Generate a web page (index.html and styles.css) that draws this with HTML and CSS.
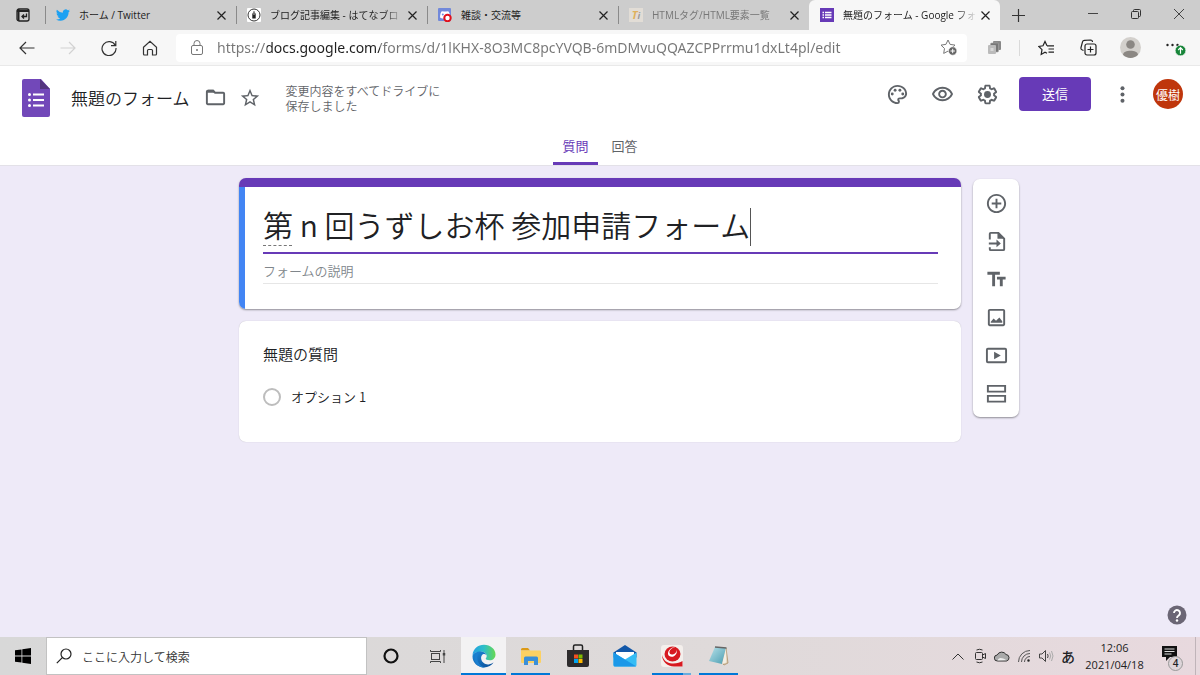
FILE: index.html
```html
<!DOCTYPE html>
<html lang="ja">
  <head>
    <meta charset="UTF-8" />
    <meta name="viewport" content="width=device-width, initial-scale=1" />
    <title>無題のフォーム - Google フォーム</title>
    <link rel="stylesheet" href="styles.css">
  </head>
  <body>
    <!-- Browser tabs -->
    <div class="tab-strip">
      <button class="tab-menu" aria-label="タブ操作">
        <svg width="14" height="14" viewBox="0 0 14 14" fill="none" stroke="#222" stroke-width="1.3"><rect x="1" y="1" width="12" height="12" rx="2"/><path d="M1 3h12M2.5 1v12" stroke-width="2"/><path d="M10.500 5.500v3H6M8 6.500l-2 2 2 2"/></svg>
      </button>
      <div class="tab">
        <svg class="tab-icon" viewBox="0 0 24 24" fill="#1da1f2"><path d="M23.950 4.570a10 10 0 0 1-2.820.770 4.960 4.960 0 0 0 2.160-2.720 9.900 9.900 0 0 1-3.120 1.190 4.920 4.920 0 0 0-8.380 4.480A13.930 13.930 0 0 1 1.640 3.160a4.920 4.920 0 0 0 1.520 6.570 4.900 4.900 0 0 1-2.230-.610v.060a4.920 4.920 0 0 0 3.950 4.830 5 5 0 0 1-2.210.080 4.940 4.940 0 0 0 4.600 3.420A9.870 9.870 0 0 1 0 19.540a13.990 13.990 0 0 0 7.550 2.210c9.050 0 14-7.500 14-13.980 0-.210 0-.420-.020-.630a9.940 9.940 0 0 0 2.420-2.570z"/></svg>
        <span class="tab-title">ホーム / Twitter</span>
        <button class="tab-close" aria-label="閉じる"><svg width="9" height="9" viewBox="0 0 9 9" stroke="#222" stroke-width="1.200"><path d="M.5.5l8 8M8.500.5l-8 8"/></svg></button>
      </div>
      <div class="tab">
        <svg class="tab-icon" viewBox="0 0 14 14"><rect width="14" height="14" rx="1" fill="#fff"/><circle cx="7" cy="7" r="6" fill="none" stroke="#333"/><path d="M5.300 10.500V6L7 2.800 8.700 6v4.500z" fill="#222"/><path d="M7 4v3" stroke="#fff" stroke-width=".7"/></svg>
        <span class="tab-title fade">ブログ記事編集 - はてなブロ</span>
        <button class="tab-close" aria-label="閉じる"><svg width="9" height="9" viewBox="0 0 9 9" stroke="#222" stroke-width="1.200"><path d="M.5.5l8 8M8.500.5l-8 8"/></svg></button>
      </div>
      <div class="tab">
        <svg class="tab-icon" viewBox="0 0 14 14"><rect width="13" height="13" rx="1" fill="#7289da"/><path d="M2 9.500C2 6 3 3.500 4 3.200l2 .3h2l2-.3c1 .3 2 2.800 2 5.300l-3 2H4z" fill="#fff"/><circle cx="4.800" cy="6.500" r="1" fill="#7289da"/><circle cx="9.500" cy="10" r="3.200" fill="#fff" stroke="#e0101c" stroke-width="2"/></svg>
        <span class="tab-title">雑談・交流等</span>
        <button class="tab-close" aria-label="閉じる"><svg width="9" height="9" viewBox="0 0 9 9" stroke="#222" stroke-width="1.200"><path d="M.5.5l8 8M8.500.5l-8 8"/></svg></button>
      </div>
      <div class="tab sleeping">
        <span class="tab-icon ti-icon">T<small>i</small></span>
        <span class="tab-title fade">HTMLタグ/HTML要素一覧</span>
        <button class="tab-close" aria-label="閉じる"><svg width="9" height="9" viewBox="0 0 9 9" stroke="#222" stroke-width="1.200"><path d="M.5.5l8 8M8.500.5l-8 8"/></svg></button>
      </div>
      <div class="tab active">
        <svg class="tab-icon" viewBox="0 0 14 14"><rect width="14" height="14" fill="#673ab7"/><path d="M5 4.500h6.500M5 7h6.500M5 9.500h6.500M2.500 4.500H4M2.500 7H4M2.500 9.500H4" stroke="#fff" stroke-width="1.400"/></svg>
        <span class="tab-title fade">無題のフォーム - Google フォ</span>
        <button class="tab-close" aria-label="閉じる"><svg width="9" height="9" viewBox="0 0 9 9" stroke="#222" stroke-width="1.200"><path d="M.5.5l8 8M8.500.5l-8 8"/></svg></button>
      </div>
      <button class="new-tab" aria-label="新しいタブ"><svg width="13" height="13" viewBox="0 0 13 13" stroke="#333" stroke-width="1.200"><path d="M6.500 0v13M0 6.500h13"/></svg></button>
      <div class="window-controls">
        <button aria-label="最小化"><svg width="10" height="10" viewBox="0 0 10 10" stroke="#444"><path d="M0 4.500h10"/></svg></button>
        <button aria-label="元に戻す"><svg width="10" height="10" viewBox="0 0 10 10" fill="none" stroke="#333"><rect x=".5" y="2.500" width="7" height="7" rx="1"/><path d="M2.500 2.500V1.500a1 1 0 0 1 1-1h5a1 1 0 0 1 1 1v5a1 1 0 0 1-1 1h-1"/></svg></button>
        <button aria-label="閉じる"><svg width="10" height="10" viewBox="0 0 10 10" stroke="#444"><path d="M0 0l10 10M10 0L0 10"/></svg></button>
      </div>
    </div>

    <!-- Address bar -->
    <div class="browser-bar">
      <div class="nav-buttons">
        <button aria-label="戻る"><svg width="16" height="14" viewBox="0 0 16 14" fill="none" stroke="#333" stroke-width="1.200"><path d="M15.500 7H1M7 1L1 7l6 6"/></svg></button>
        <button aria-label="進む" disabled><svg width="16" height="14" viewBox="0 0 16 14" fill="none" stroke="#d2d2d2" stroke-width="1.200"><path d="M.5 7H15M9 1l6 6-6 6"/></svg></button>
        <button aria-label="更新"><svg width="16" height="16" viewBox="0 0 16 16" fill="none" stroke="#333" stroke-width="1.200"><path d="M14.300 5.500A7 7 0 1 0 15 8M14.800 1v4.700H10"/></svg></button>
        <button aria-label="ホーム"><svg width="16" height="16" viewBox="0 0 16 16" fill="none" stroke="#333" stroke-width="1.200"><path d="M1.500 7.200L8 1.200l6.500 6V14a1 1 0 0 1-1 1h-3v-4.500a1 1 0 0 0-1-1h-3a1 1 0 0 0-1 1V15h-3a1 1 0 0 1-1-1z"/></svg></button>
      </div>
      <div class="address">
        <svg width="14" height="16" viewBox="0 0 14 16" fill="none" stroke="#777"><rect x="1.500" y="5.500" width="11" height="9" rx="1.500"/><path d="M4 5.500V3.500a3 3 0 0 1 6 0v2"/><circle cx="7" cy="10" r=".6" fill="#777"/></svg>
        <input class="url" type="text" aria-label="アドレス" value="https://docs.google.com/forms/d/1lKHX-8O3MC8pcYVQB-6mDMvuQQAZCPPrrmu1dxLt4pl/edit">
        <button aria-label="お気に入りに追加"><svg width="18" height="17" viewBox="0 0 18 17" fill="none" stroke="#777"><path d="M8 1l2.100 4.400 4.900.7-3.500 3.400.8 4.900L8 12.100l-4.300 2.300.8-4.900L1 6.100l4.900-.7z"/><circle cx="12.700" cy="12" r="4.200" fill="#666" stroke="#fff" stroke-width=".6"/><path d="M12.700 9.800v4.400M10.500 12h4.400" stroke="#fff"/></svg></button>
      </div>
      <div class="browser-tools">
        <button aria-label="拡張機能"><svg width="15" height="15" viewBox="0 0 15 15"><rect x="6" y="1" width="8" height="9" rx="1" fill="#888"/><rect x="3.500" y="3" width="8" height="9" rx="1" fill="#777" stroke="#aaa" stroke-width=".6"/><rect x="1" y="5" width="8" height="9" rx="1" fill="#bbb"/><path d="M3.500 8h3v3h-3z" fill="#d8d8d8"/></svg></button>
        <span class="bar-divider"></span>
        <button aria-label="お気に入り"><svg width="17" height="16" viewBox="0 0 17 16" fill="none" stroke="#222" stroke-width="1.200"><path d="M9 5.800L7 1.500 5 5.800l-4.200.6L4 9.600l-.8 4.800L7 12.200l2 1.100M9 5.800h7M10.500 9H16M10.500 12.200H16"/></svg></button>
        <button aria-label="コレクション"><svg width="17" height="17" viewBox="0 0 17 17" fill="none" stroke="#222" stroke-width="1.200"><rect x="5" y="5" width="11" height="11" rx="2"/><path d="M10.500 7.500v6M7.500 10.500h6M3.500 11.500L2 10.800A2 2 0 0 1 1 8.500L2.500 3a2 2 0 0 1 2-1.700l6-.3A2 2 0 0 1 12.500 3"/></svg></button>
        <button aria-label="プロファイル"><svg width="21" height="21" viewBox="0 0 21 21"><circle cx="10.500" cy="10.500" r="10.500" fill="#d3d0cc"/><circle cx="10.500" cy="7.500" r="4.300" fill="#8b8783"/><path d="M3 17.800c0-5.500 15-5.500 15 0a10.500 10.500 0 0 1-15 0z" fill="#8b8783"/></svg></button>
        <button aria-label="設定など"><svg width="20" height="19" viewBox="0 0 20 19"><g fill="#222"><circle cx="1.500" cy="7" r="1.200"/><circle cx="6.500" cy="7" r="1.200"/><circle cx="11.500" cy="7" r="1.200"/></g><circle cx="14.500" cy="12.500" r="5.300" fill="#178539" stroke="#f7f7f7" stroke-width=".6"/><path d="M14.500 15.800V9.700M12.200 12l2.300-2.300 2.300 2.300" fill="none" stroke="#fff" stroke-width="1.200"/></svg></button>
      </div>
    </div>

    <!-- Forms header -->
    <header class="app-header">
      <div class="app-row">
        <a class="logo" href="#" aria-label="フォームのホーム">
          <svg width="28" height="38" viewBox="0 0 28 38"><path d="M2 0h17l9 10v26a2 2 0 0 1-2 2H2a2 2 0 0 1-2-2V2a2 2 0 0 1 2-2z" fill="#7248b9"/><path d="M18 0l10 10H18z" fill="#54357f"/><path d="M11 15.500h11M11 21h11M11 26.500h11" stroke="#fff" stroke-width="2.200"/><g fill="#fff"><circle cx="7.500" cy="15.500" r="1.500"/><circle cx="7.500" cy="21" r="1.500"/><circle cx="7.500" cy="26.500" r="1.500"/></g></svg>
        </a>
        <input class="doc-name" type="text" aria-label="ドキュメント名" value="無題のフォーム">
        <button class="doc-button" aria-label="フォルダに移動"><svg width="23" height="23" viewBox="0 0 24 24" fill="#5f6368"><path d="M9.170 6l2 2H20v10H4V6h5.170M10 4H4c-1.100 0-2 .9-2 2v12c0 1.100.9 2 2 2h16c1.100 0 2-.9 2-2V8c0-1.100-.9-2-2-2h-8l-2-2z"/><path d="M4 4h6l2 3H3z"/></svg></button>
        <button class="doc-button" aria-label="スターを付ける"><svg width="22" height="22" viewBox="0 0 24 24" fill="#5f6368"><path d="M22 9.240l-7.190-.620L12 2 9.190 8.630 2 9.240l5.460 4.730L5.820 21 12 17.270 18.180 21l-1.630-7.030L22 9.240zM12 15.400l-3.760 2.270 1-4.280-3.320-2.880 4.380-.380L12 6.100l1.710 4.040 4.380.380-3.320 2.880 1 4.280L12 15.400z"/></svg></button>
        <p class="save-state">変更内容をすべてドライブに<br>保存しました</p>
        <div class="app-actions">
          <button class="icon-button" aria-label="テーマをカスタマイズ"><svg width="23" height="23" viewBox="0 0 24 24" fill="#5f6368"><path d="M12 22C6.490 22 2 17.510 2 12S6.490 2 12 2s10 4.040 10 9c0 3.310-2.690 6-6 6h-1.770c-.280 0-.5.220-.5.5 0 .120.050.230.130.330.410.470.640 1.060.640 1.670A2.500 2.500 0 0 1 12 22zm0-18c-4.410 0-8 3.590-8 8s3.590 8 8 8c.280 0 .5-.220.5-.5a.540.540 0 0 0-.140-.350c-.410-.460-.630-1.050-.630-1.650a2.500 2.500 0 0 1 2.500-2.500H16c2.210 0 4-1.790 4-4 0-3.860-3.590-7-8-7z"/><circle cx="6.500" cy="11.500" r="1.500"/><circle cx="9.500" cy="7.500" r="1.500"/><circle cx="14.500" cy="7.500" r="1.500"/><circle cx="17.500" cy="11.500" r="1.500"/></svg></button>
          <button class="icon-button" aria-label="プレビュー"><svg width="23" height="23" viewBox="0 0 24 24" fill="#5f6368"><path d="M12 6c3.790 0 7.170 2.130 8.820 5.500C19.170 14.870 15.790 17 12 17s-7.170-2.130-8.820-5.500C4.830 8.130 8.210 6 12 6m0-2C7 4 2.730 7.110 1 11.500 2.730 15.890 7 19 12 19s9.270-3.110 11-7.500C21.270 7.110 17 4 12 4zm0 5c1.380 0 2.500 1.120 2.500 2.500S13.380 14 12 14s-2.500-1.120-2.500-2.500S10.620 9 12 9m0-2c-2.480 0-4.500 2.020-4.500 4.500S9.520 16 12 16s4.500-2.020 4.500-4.500S14.480 7 12 7z"/></svg></button>
          <button class="icon-button" aria-label="設定"><svg width="23" height="23" viewBox="0 0 24 24" fill="#5f6368"><path d="M13.850 22.250h-3.700c-.740 0-1.360-.540-1.450-1.270l-.270-1.890c-.270-.140-.530-.290-.790-.460l-1.800.720c-.7.260-1.470-.030-1.810-.650L2.200 15.530c-.350-.660-.2-1.440.360-1.880l1.530-1.190c-.010-.150-.020-.3-.020-.460 0-.150.010-.310.020-.460l-1.520-1.190c-.590-.450-.740-1.260-.370-1.880l1.850-3.190c.340-.620 1.110-.9 1.790-.630l1.810.730c.260-.170.520-.320.780-.460l.270-1.910c.090-.7.710-1.250 1.440-1.250h3.700c.740 0 1.360.540 1.450 1.270l.270 1.890c.270.140.530.290.790.460l1.800-.720c.710-.260 1.480.030 1.820.650l1.840 3.180c.360.660.2 1.440-.360 1.880l-1.520 1.190c.010.150.020.3.020.460s-.010.310-.020.460l1.520 1.190c.560.450.720 1.230.370 1.860l-1.860 3.220c-.340.620-1.110.9-1.800.630l-1.800-.720c-.260.170-.520.320-.780.460l-.270 1.910c-.1.680-.720 1.220-1.460 1.220zm-3.230-2h2.760l.370-2.550.530-.220c.440-.180.880-.440 1.340-.780l.450-.340 2.380.960 1.380-2.400-2.030-1.580.070-.560c.030-.260.060-.510.060-.780s-.030-.530-.060-.780l-.070-.560 2.030-1.580-1.390-2.400-2.390.960-.450-.350c-.420-.320-.870-.580-1.330-.770l-.520-.220-.370-2.550h-2.760l-.370 2.550-.530.210c-.440.190-.880.440-1.340.790l-.450.330-2.380-.950-1.390 2.390 2.030 1.580-.070.560a7 7 0 0 0-.060.790c0 .260.020.530.060.780l.070.560-2.030 1.580 1.380 2.400 2.390-.960.450.350c.430.330.860.580 1.330.770l.530.220.380 2.550z"/><circle cx="12" cy="12" r="3.600"/></svg></button>
          <button class="send-button">送信</button>
          <button class="icon-button" aria-label="その他"><svg width="23" height="23" viewBox="0 0 24 24" fill="#5f6368"><circle cx="12" cy="5.500" r="2.100"/><circle cx="12" cy="12" r="2.100"/><circle cx="12" cy="18.500" r="2.100"/></svg></button>
          <button class="avatar">優樹</button>
        </div>
      </div>
      <nav class="form-tabs">
        <button class="form-tab selected">質問</button>
        <button class="form-tab">回答</button>
      </nav>
    </header>

    <!-- Form editor -->
    <main class="editor">
      <div class="cards">
        <section class="card title-card">
          <div class="title-body">
            <div class="title-field">
              <input class="form-title" type="text" aria-label="フォームのタイトル" value="第 n 回うずしお杯 参加申請フォーム">
              <span class="caret"></span>
              <span class="spell-mark"></span>
            </div>
            <input class="form-description" type="text" aria-label="フォームの説明" placeholder="フォームの説明">
          </div>
        </section>
        <section class="card question-card">
          <h2 class="question-title">無題の質問</h2>
          <label class="option"><input type="radio" name="option">オプション 1</label>
        </section>
      </div>
      <div class="side-toolbar">
        <button aria-label="質問を追加"><svg width="23" height="23" viewBox="0 0 24 24" fill="#5f6368"><path d="M13 7h-2v4H7v2h4v4h2v-4h4v-2h-4V7zm-1-5C6.480 2 2 6.480 2 12s4.480 10 10 10 10-4.480 10-10S17.520 2 12 2zm0 18c-4.410 0-8-3.590-8-8s3.590-8 8-8 8 3.590 8 8-3.590 8-8 8z"/></svg></button>
        <button aria-label="質問をインポート"><svg width="23" height="23" viewBox="0 0 24 24" fill="none" stroke="#5f6368" stroke-width="2"><path d="M5 10V4a1 1 0 0 1 1-1h8l6 6v11a1 1 0 0 1-1 1H6a1 1 0 0 1-1-1v-2M4 14h10"/><path d="M13 2l7.500 7H13zM12 10l4.500 4-4.500 4z" fill="#5f6368" stroke="none"/></svg></button>
        <button aria-label="タイトルと説明を追加"><svg width="23" height="23" viewBox="0 0 24 24" fill="#5f6368"><path d="M2.500 4v3h5v12h3V7h5V4h-13zm19 5h-9v3h3v7h3v-7h3V9z"/></svg></button>
        <button aria-label="画像を追加"><svg width="23" height="23" viewBox="0 0 24 24" fill="#5f6368"><path d="M19 5v14H5V5h14m0-2H5c-1.100 0-2 .9-2 2v14c0 1.100.9 2 2 2h14c1.100 0 2-.9 2-2V5c0-1.100-.9-2-2-2zM6 17.500v-1l3-3.500 2.500 2.500L15 12l3 4v1.500z"/></svg></button>
        <button aria-label="動画を追加"><svg width="23" height="23" viewBox="0 0 24 24" fill="#5f6368"><path d="M9.500 8v8l7-4zM21 4H3a2 2 0 0 0-2 2v12a2 2 0 0 0 2 2h18a2 2 0 0 0 2-2V6a2 2 0 0 0-2-2zm0 14H3V6h18z"/></svg></button>
        <button aria-label="セクションを追加"><svg width="23" height="23" viewBox="0 0 24 24" fill="none" stroke="#5f6368" stroke-width="2"><path d="M3 4h18v6H3zM3 14.500h18v6H3z"/></svg></button>
      </div>
      <button class="help" aria-label="ヘルプ"><svg width="20" height="20" viewBox="0 0 20 20"><circle cx="10" cy="10" r="9.500" fill="#6b6675"/><path d="M7 8a3 3 0 1 1 4.800 2.400C10.500 11.300 10 11.600 10 13" fill="none" stroke="#fff" stroke-width="1.900"/><circle cx="10" cy="15.500" r="1.200" fill="#fff"/></svg></button>
    </main>

    <!-- Windows taskbar -->
    <footer class="taskbar">
      <button class="task narrow" aria-label="スタート"><svg width="16" height="16" viewBox="0 0 16 16"><path d="M0 2.300L6.500 1.400v6.200H0zM7.300 1.300L16 0v7.600H7.300zM0 8.400h6.500v6.200L0 13.700zM7.300 8.400H16V16l-8.700-1.300z"/></svg></button>
      <label class="task-search">
        <svg width="16" height="16" viewBox="0 0 16 16" fill="none" stroke="#222" stroke-width="1.200"><circle cx="10" cy="6" r="5"/><path d="M6.300 9.700L.8 15.200"/></svg>
        <input type="search" placeholder="ここに入力して検索" aria-label="検索">
      </label>
      <button class="task" aria-label="Cortana"><svg width="16" height="16" viewBox="0 0 16 16"><circle cx="8" cy="8" r="6.500" fill="none" stroke="#111" stroke-width="2.200"/></svg></button>
      <button class="task narrow" aria-label="タスク ビュー"><svg width="17" height="15" viewBox="0 0 17 15" fill="none" stroke="#444"><rect x="2.500" y="4.500" width="8" height="6"/><path d="M1.500 1v1.500h10V1M1.500 14v-1.500h10V14M15 1v13"/><path d="M15 4v2.500" stroke-width="2.500"/></svg></button>
      <button class="task current" aria-label="Edge">
        <svg width="24" height="24" viewBox="0 0 24 24">
          <defs>
            <linearGradient id="edgeTop" x1="0" x2="1"><stop offset="0" stop-color="#239fe2"/><stop offset=".5" stop-color="#2dbfc8"/><stop offset="1" stop-color="#67d84f"/></linearGradient>
            <linearGradient id="edgeBottom" x1="0" x2="1" y2="1"><stop offset="0" stop-color="#1a8ad9"/><stop offset="1" stop-color="#0c4c96"/></linearGradient>
          </defs>
          <path d="M.5 11C1.200 4.800 6 .8 12 .8c6.500 0 11.500 4.500 11.500 9.700 0 3.500-2.500 5.800-5.800 5.800-2.500 0-4-.8-4-1.700 0-.6 1-1 1-2.600 0-2.300-2.200-4.300-5.200-4.300C5.500 7.700 2 8.500.5 11z" fill="url(#edgeTop)"/>
          <path d="M.5 12.500C.5 9 4.500 7.500 8.700 7.500c3 0 5 1.500 5.700 3.500-1-1-2.200-1.300-3-.9-1.800.9-2.600 2.800-2.200 5 .5 3.400 4 5.800 7.600 5.300 1.700-.2 3.400-1 4.800-1.800-2 3-5.500 4.800-9.600 4.800C5.500 23.400.5 18.500.5 12.500z" fill="url(#edgeBottom)"/>
          <path d="M8.800 7.500c-3 2-4 5-3.300 8.200.8 3.900 3.800 6.900 7.500 7.700-2.500.1-5-.6-7-2C.7 17.600.9 8.800 8.800 7.500z" fill="#1b7fd0"/>
        </svg>
      </button>
      <button class="task running" aria-label="エクスプローラー"><svg width="22" height="20" viewBox="0 0 22 20"><path d="M1 3.500A1.500 1.500 0 0 1 2.500 2H8l2 2.500H1z" fill="#dc9a17"/><path d="M1 4.500h19a1 1 0 0 1 1 1V16a1 1 0 0 1-1 1H2a1 1 0 0 1-1-1z" fill="#fcd163"/><path d="M4 19v-7a1.500 1.500 0 0 1 1.500-1.500h11A1.500 1.500 0 0 1 18 12v7h-4v-4H8v4z" fill="#3a8fd8"/></svg></button>
      <button class="task" aria-label="Microsoft Store"><svg width="24" height="24" viewBox="0 0 24 24"><path d="M7.500 7V2.500a1.500 1.500 0 0 1 1.500-1.500h6a1.500 1.500 0 0 1 1.500 1.500V7" fill="none" stroke="#222" stroke-width="1.500"/><path d="M1 6h22v15a2 2 0 0 1-2 2H3a2 2 0 0 1-2-2z" fill="#2d2b2c"/><path d="M8 10.500h4v4H8z" fill="#f25022"/><path d="M12.500 10.500h4v4h-4z" fill="#7fba00"/><path d="M8 15h4v4H8z" fill="#00a4ef"/><path d="M12.500 15h4v4h-4z" fill="#ffb900"/></svg></button>
      <button class="task" aria-label="メール"><svg width="24" height="24" viewBox="0 0 24 24"><path d="M.5 8.500L12 1l11.500 7.500v5H.5z" fill="#1257a8"/><path d="M3 8h18v4l-9 5-9-5z" fill="#fff"/><path d="M.5 8.500L12 15.500l11.500-7V21a1.500 1.500 0 0 1-1.500 1.500H2A1.500 1.500 0 0 1 .5 21z" fill="#35bdf5"/><path d="M.5 8.500L23 22.300a1.500 1.500 0 0 1-1 .2H2A1.500 1.500 0 0 1 .5 21z" fill="#1b98e8"/></svg></button>
      <button class="task running grouped" aria-label="ウイルスバスター"><svg width="24" height="24" viewBox="0 0 24 24"><rect x="1" y="1" width="22" height="22" rx="3" fill="#f4efec"/><ellipse cx="12.500" cy="10" rx="8" ry="7.500" fill="#d71920"/><path d="M20 3c-4-1-9.500 1-10.500 4.500-.6 2.500 1.700 3.500 4 2.700 2.200-.8 3.500-2.700 3-4.700 1.500 4-2 7.500-5 7.300-3.500-.2-4.500-3.500-2.500-6.300C10.500 4 14.500 2 20 3z" fill="#fff"/><path d="M2 10c1 5 4.500 7.500 9.500 8 4.500.3 8-1.500 11-4.500v9H14C7 22.500 2 17 2 10z" fill="#f4efec"/><path d="M2 11c1.500 5.500 5 8 10 8.500 4.500.3 8-1 10.500-2.500v5.500H14C7 22.500 2 17 2 11z" fill="#d71920"/></svg></button>
      <button class="task running" aria-label="メモ帳"><svg width="24" height="22" viewBox="0 0 24 22"><defs><linearGradient id="note" x1="0" x2="1" y2="1"><stop offset="0" stop-color="#b8e2ea"/><stop offset="1" stop-color="#4a9cb0"/></linearGradient></defs><path d="M19 3l2 15-4 2-2-2z" fill="#d9c9ad" stroke="#a8885e" stroke-width=".7"/><path d="M8 2l11 1-4 16-13-3z" fill="url(#note)"/><path d="M19 3l-4 16 4.500-1.500z" fill="#f3eee4"/><path d="M8 2l11.500 1" stroke="#666" stroke-width="1.500"/></svg></button>
      <div class="tray">
        <button aria-label="隠れているインジケーター"><svg width="12" height="7" viewBox="0 0 12 7" fill="none" stroke="#333"><path d="M.5 6.500L6 1l5.500 5.500"/></svg></button>
        <button aria-label="会議"><svg width="13" height="16" viewBox="0 0 13 16" fill="none" stroke="#333"><rect x="1.500" y="4.500" width="7" height="7" rx="1"/><path d="M8.500 7l3-1.500v5l-3-1.500M2.500 2q3-1.500 6 0M2.500 14q3 1.500 6 0"/></svg></button>
        <button aria-label="OneDrive"><svg width="16" height="12" viewBox="0 0 16 12"><path d="M3.500 11a3 3 0 0 1-.3-6A5 5 0 0 1 12 4.500a3.300 3.300 0 0 1 .5 6.500z" fill="#aaa" stroke="#333"/><path d="M3.500 10.500c1-3 4-3.500 9-.2z" fill="#eee"/></svg></button>
        <button aria-label="ネットワーク"><svg width="14" height="14" viewBox="0 0 14 14" fill="none" stroke="#555"><path d="M1.500 13A11.500 11.500 0 0 1 13 1.500M4.500 13A8.500 8.500 0 0 1 13 4.500M7.500 13A5.500 5.500 0 0 1 13 7.500"/><circle cx="11.500" cy="11.500" r="1" fill="#222"/></svg></button>
        <button aria-label="音量"><svg width="15" height="14" viewBox="0 0 15 14" fill="none" stroke="#444"><path d="M.5 5h2.500l3.500-3.500v11L3 9H.5z"/><path d="M8.500 5q1.300 2 0 4"/><path d="M10.500 3.500q2.500 3.500 0 7M12.500 2q3 5 0 10" stroke="#aaa"/></svg></button>
        <button class="ime">あ</button>
        <button class="clock">12:06<br>2021/04/18</button>
        <button class="notifications" aria-label="通知"><svg width="24" height="23" viewBox="0 0 24 23"><path d="M1 1h15v11H9l-4 4v-4H1z" fill="#111"/><path d="M3.500 4h10M3.500 6.500h10M3.500 9h7" stroke="#ddd"/></svg><span class="badge">4</span></button>
      </div>
    </footer>
  </body>
</html>
```
FILE: styles.css
```css
:root {
  --purple: #673ab7;
  --canvas: #eeeaf8;
  --gray: #5f6368;
  --text: #202124;
  --jp: 'Noto Sans CJK JP', sans-serif;
  --ui: 'Open Sans', 'Noto Sans CJK JP', sans-serif;
}

* {
  margin: 0;
  padding: 0;
  box-sizing: border-box;
}

body {
  display: flex;
  flex-direction: column;
  min-height: 100vh;
  font-family: var(--jp);
  color: var(--text);
  background-color: var(--canvas);
}

button {
  display: flex;
  align-items: center;
  justify-content: center;
  border: none;
  background: none;
  color: inherit;
  font-family: inherit;
  cursor: pointer;
}

input {
  border: none;
  outline: none;
  background: none;
  color: inherit;
  font-family: inherit;
  min-width: 0;
}

svg {
  display: block;
  flex-shrink: 0;
}

/* Browser tabs */
.tab-strip {
  display: flex;
  height: 30px;
  background-color: #cdcdcd;
  font-family: var(--ui);
  font-size: 10px;
}

.tab-menu {
  width: 45px;
}

.tab {
  position: relative;
  flex: 0 1 191px;
  min-width: 0;
  display: flex;
  align-items: center;
  padding: 0 7px 0 11px;
}

.tab:not(.active)::before {
  content: "";
  position: absolute;
  left: 0;
  top: 6px;
  bottom: 6px;
  width: 1px;
  background-color: #8a8a8a;
}

.tab.active {
  background-color: #f7f7f7;
  border-radius: 6px 6px 0 0;
}

.tab-icon {
  width: 14px;
  height: 14px;
  flex-shrink: 0;
  margin-right: 9px;
}

.tab-title {
  flex: 1;
  overflow: hidden;
  white-space: nowrap;
  padding-bottom: 2px;
  color: #222;
}

.tab-title.fade {
  -webkit-mask-image: linear-gradient(to right, #000 85%, transparent);
  mask-image: linear-gradient(to right, #000 85%, transparent);
}

.sleeping .tab-title {
  color: #777;
}

.ti-icon {
  background-color: #e2ddd6;
  color: #dfb15c;
  font-size: 11px;
  font-style: italic;
  font-weight: 700;
  line-height: 14px;
  text-align: center;
}

.ti-icon small {
  color: #999;
  font-size: 9px;
}

.tab-close {
  width: 16px;
  height: 16px;
}

.new-tab {
  width: 36px;
}

.window-controls {
  display: flex;
  margin-left: auto;
}

.window-controls button {
  width: 43px;
  padding-bottom: 3px;
}

/* Address bar */
.browser-bar {
  display: flex;
  align-items: center;
  height: 36px;
  background-color: #f7f7f7;
  border-bottom: 1px solid #e9e9e9;
}

.nav-buttons {
  display: flex;
  padding: 0 6px;
}

.nav-buttons button {
  width: 41px;
  height: 28px;
}

.address {
  flex: 1;
  min-width: 0;
  display: flex;
  align-items: center;
  height: 28px;
  padding: 0 9px 0 14px;
  border-radius: 4px;
  background-color: #fff;
}

.url {
  flex: 1;
  margin-left: 13px;
  font-family: 'Noto Sans', sans-serif;
  font-size: 14px;
  line-height: 24px;
  /* only the host part is dark */
  background-image: linear-gradient(to right, #767676 50px, #1f1f1f 50px, #1f1f1f 163px, #767676 163px);
  -webkit-background-clip: text;
  background-clip: text;
  -webkit-text-fill-color: transparent;
}

.browser-tools {
  display: flex;
  align-items: center;
  padding-left: 6px;
}

.browser-tools button {
  width: 42px;
  height: 28px;
}

.browser-tools button:last-child {
  width: 49px;
}

.bar-divider {
  width: 1px;
  height: 16px;
  margin: 0 5px 0 4px;
  background-color: #dadada;
}

/* Forms header */
.app-header {
  background-color: #fff;
  border-bottom: 1px solid #e3e1e8;
}

.app-row {
  display: flex;
  align-items: center;
  height: 63px;
  padding: 0 17px 0 22px;
}

.doc-name {
  field-sizing: content;
  margin-left: 21px;
  font-size: 17px;
  font-weight: 350;
  line-height: 28px;
}

.doc-button {
  width: 34px;
  height: 34px;
}

.doc-name + .doc-button {
  margin-left: 9px;
}

.save-state {
  margin-left: 19px;
  font-size: 12px;
  font-weight: 350;
  line-height: 15px;
  color: var(--gray);
  white-space: nowrap;
}

.app-actions {
  display: flex;
  align-items: center;
  align-self: flex-start;
  height: 56px;
  margin-left: auto;
}

.icon-button {
  width: 45px;
  height: 45px;
}

.send-button {
  width: 72px;
  height: 34px;
  margin: 0 9px;
  padding-bottom: 2px;
  border-radius: 4px;
  background-color: var(--purple);
  color: #fff;
  font-size: 13px;
}

.avatar {
  width: 30px;
  height: 30px;
  margin-left: 8px;
  border-radius: 50%;
  background-color: #bf360c;
  color: #fff;
  font-size: 12px;
}

.form-tabs {
  display: flex;
  justify-content: center;
  gap: 4px;
}

.form-tab {
  width: 45px;
  height: 36px;
  border-bottom: 3px solid transparent;
  color: var(--gray);
  font-size: 13px;
}

.form-tab.selected {
  border-bottom-color: var(--purple);
  color: var(--purple);
}

/* Form editor */
.editor {
  position: relative;
  flex: 1;
  display: grid;
  grid-template-columns: 1fr minmax(0, 722px) 1fr;
  align-items: start;
  padding: 12px 0;
}

.cards {
  grid-column: 2;
  display: grid;
  gap: 12px;
}

.card {
  background-color: #fff;
  border-radius: 7px;
}

.title-card {
  overflow: hidden;
  border-top: 9px solid var(--purple);
  box-shadow: 0 1px 2px rgba(0, 0, 0, 0.4);
}

.title-body {
  padding: 15px 23px 25px 18px;
  border-left: 6px solid #4285f4;
}

.title-field {
  position: relative;
  display: flex;
  align-items: flex-end;
  padding-bottom: 6px;
  border-bottom: 2px solid var(--purple);
}

.form-title {
  field-sizing: content;
  font-size: 30px;
  font-weight: 350;
  line-height: 44px;
  height: 44px;
}

.caret {
  width: 1px;
  height: 38px;
  background-color: #555;
}

.spell-mark {
  position: absolute;
  left: 0;
  bottom: 6px;
  width: 29px;
  border-bottom: 1px dashed #777;
}

.form-description {
  width: 100%;
  height: 25px;
  margin-top: 5px;
  padding-bottom: 2px;
  border-bottom: 1px solid #e6e6e6;
  font-size: 13px;
  font-weight: 350;
}

.form-description::placeholder {
  color: #80868b;
}

.question-card {
  padding: 22px 23px 34px 24px;
  box-shadow: 0 0 1px rgba(0, 0, 0, 0.25);
}

.question-title {
  font-size: 15px;
  font-weight: 350;
  line-height: 22px;
}

.option {
  display: flex;
  align-items: center;
  gap: 10px;
  margin-top: 21px;
  font-size: 13px;
  font-weight: 350;
  line-height: 22px;
}

.option input {
  appearance: none;
  width: 18px;
  height: 18px;
  border: 2px solid #bdbdbd;
  border-radius: 50%;
}

.side-toolbar {
  grid-column: 3;
  width: 46px;
  margin: 1px 0 0 12px;
  padding: 5px 0;
  background-color: #fff;
  border-radius: 7px;
  box-shadow: 0 1px 2px rgba(0, 0, 0, 0.4);
}

.side-toolbar button {
  width: 100%;
  height: 38px;
}

.help {
  position: absolute;
  right: 13px;
  bottom: 12px;
}

/* Taskbar */
.taskbar {
  display: flex;
  height: 38px;
  background-image: linear-gradient(to right, #d8d8d8, #dfdada 60%, #e8d9de);
}

.task {
  position: relative;
  width: 47px;
}

.task.narrow {
  width: 46px;
}

.task.current {
  background-color: #f3f2f3;
  background-clip: content-box;
  padding: 0 1px;
}

.task.current::after,
.task.running::after {
  content: "";
  position: absolute;
  left: 4px;
  right: 4px;
  bottom: 0;
  height: 2px;
  background-color: #0078d7;
}

.task.current::after {
  left: 1px;
  right: 1px;
}

.task.grouped::after {
  background-image: linear-gradient(to right, #0078d7 80%, #69addf 80%);
}

.task-search {
  flex: 0 1 321px;
  display: flex;
  align-items: center;
  gap: 10px;
  min-width: 0;
  padding: 0 9px;
  border: 1px solid #c2c2c2;
  background-color: #fff;
}

.task-search input {
  flex: 1;
  font-size: 12px;
  font-weight: 350;
}

.task-search input::placeholder {
  color: #333;
}

.tray {
  display: flex;
  margin-left: auto;
  margin-right: 4px;
  border-right: 1px solid #c0b4b9;
  font-family: var(--ui);
}

.tray button {
  width: 22px;
}

.tray .ime {
  font-family: var(--jp);
  font-size: 14px;
  font-weight: 500;
}

.tray .clock {
  width: 71px;
  font-size: 11px;
  line-height: 17px;
  color: #222;
}

.tray .notifications {
  position: relative;
  width: 45px;
}

.badge {
  position: absolute;
  right: 12px;
  bottom: 4px;
  width: 15px;
  height: 15px;
  border: 1px solid #999;
  border-radius: 50%;
  background-color: #ddd5d9;
  font-size: 10px;
  font-weight: 600;
  line-height: 13px;
}
```
